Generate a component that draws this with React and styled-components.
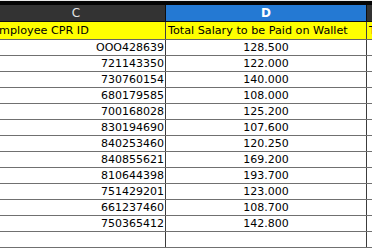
import React from "react";
import styled, { createGlobalStyle } from "styled-components";

const Global = createGlobalStyle`
  html, body { margin: 0; padding: 0; background: #ffffff; overflow: hidden; }
  body { font-family: "DejaVu Sans", Verdana, sans-serif; }
`;

const Sheet = styled.div`
  margin-left: -10px;
  width: 392px;
`;

const TopStrip = styled.div`
  height: 1px;
  background: #e8e8e8;
  border-bottom: 4px solid #050505;
`;

const Row = styled.div`
  display: grid;
  grid-template-columns: 176px 201px 1fr;
  height: ${(p) => p.$h}px;
  box-sizing: border-box;
  border-bottom: 1px solid ${(p) => p.$line};
`;

const ColHead = styled.div`
  background: ${(p) => (p.$active ? "#2479d3" : "#333333")};
  color: ${(p) => (p.$active ? "#ffffff" : "#e4e4e4")};
  border-right: 1px solid #0e0e0e;
  font-size: 12px;
  font-weight: ${(p) => (p.$active ? 700 : 400)};
  display: flex;
  align-items: center;
  justify-content: center;
  padding-right: ${(p) => (p.$first ? "3px" : "0")};
`;

const HeadCell = styled.div`
  background: #ffff00;
  color: #000;
  font-size: 11.2px;
  border-right: 1px solid #444;
  display: flex;
  align-items: center;
  padding-left: 2px;
  white-space: nowrap;
  overflow: hidden;
`;

const Cell = styled.div`
  color: #000;
  font-size: 11px;
  border-right: 1px solid #3c3c3c;
  display: flex;
  align-items: center;
  justify-content: ${(p) => p.$align};
  padding-right: ${(p) => (p.$align === "flex-end" ? "1px" : "0")};
  white-space: nowrap;
  overflow: hidden;
`;

const data = [
  ["OOO428639", "128.500"],
  ["721143350", "122.000"],
  ["730760154", "140.000"],
  ["680179585", "108.000"],
  ["700168028", "125.200"],
  ["830194690", "107.600"],
  ["840253460", "120.250"],
  ["840855621", "169.200"],
  ["810644398", "193.700"],
  ["751429201", "123.000"],
  ["661237460", "108.700"],
  ["750365412", "142.800"],
  ["", ""],
];

export default function App() {
  return (
    <>
      <Global />
      <Sheet>
        <TopStrip />
        <Row $h={17} $line="#0e0e0e">
          <ColHead $first>C</ColHead>
          <ColHead $active>D</ColHead>
          <ColHead />
        </Row>
        <Row $h={18} $line="#666666">
          <HeadCell>Employee CPR ID</HeadCell>
          <HeadCell>Total Salary to be Paid on Wallet</HeadCell>
          <HeadCell>Total</HeadCell>
        </Row>
        {data.map(([id, amt], i) => (
          <Row key={i} $h={16} $line="#707070">
            <Cell $align="flex-end">{id}</Cell>
            <Cell $align="center">{amt}</Cell>
            <Cell $align="flex-start" />
          </Row>
        ))}
      </Sheet>
    </>
  );
}
